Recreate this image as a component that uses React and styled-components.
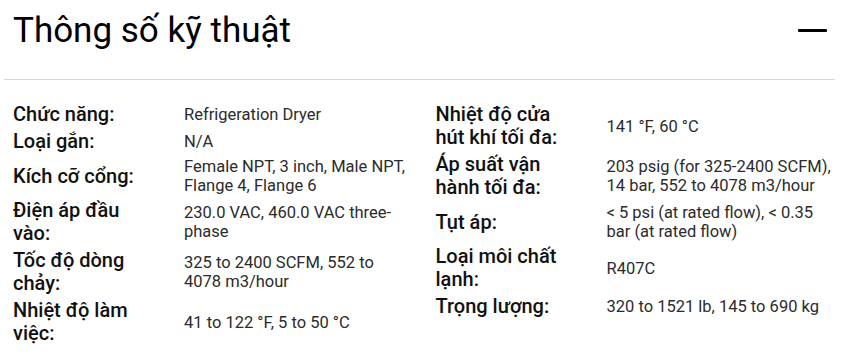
import React, { useState } from 'react';
import styled, { createGlobalStyle } from 'styled-components';

const GlobalStyle = createGlobalStyle`
  body {
    margin: 0;
    background: #fff;
    font-family: Roboto, "Noto Sans", sans-serif;
  }
`;

const StyledSection = styled.section`
  margin: 0 12px 0 4px;
`;

const StyledHeader = styled.div`
  display: flex;
  justify-content: space-between;
  align-items: flex-start;
  height: 80px;
  padding: 11px 8px 0 9px;
  box-sizing: border-box;
  border-bottom: 1px solid #d3d8df;
`;

const StyledTitle = styled.h2`
  margin: 0;
  font-size: 35px;
  line-height: 40px;
  font-weight: 400;
  color: #000;
`;

const StyledToggle = styled.button`
  display: flex;
  align-items: center;
  justify-content: center;
  width: 29px;
  height: 29px;
  margin-top: 5px;
  padding: 0;
  border: none;
  background: none;
  cursor: pointer;

  span {
    display: block;
    width: 29px;
    height: 3px;
    border-radius: 1px;
    background: #000;
  }
`;

const StyledBody = styled.div`
  display: grid;
  grid-template-columns: 1fr 1fr;
  align-items: start;
  column-gap: 23px;
  padding: 23px 0 0 9px;
`;

const StyledList = styled.dl`
  display: grid;
  grid-template-columns: 171px 1fr;
  row-gap: 4px;
  align-items: center;
  align-content: start;
  margin: 0;
`;

const StyledLabel = styled.dt`
  padding-right: 34px;
  font-size: 20px;
  line-height: 23px;
  font-weight: 500;
  color: #111;
`;

const StyledValue = styled.dd`
  margin: 0;
  font-size: 16.5px;
  line-height: 19px;
  color: #2b2b2b;
`;

const leftSpecs = [
  ['Chức năng:', 'Refrigeration Dryer'],
  ['Loại gắn:', 'N/A'],
  ['Kích cỡ cổng:', 'Female NPT, 3 inch, Male NPT, Flange 4, Flange 6'],
  ['Điện áp đầu vào:', '230.0 VAC, 460.0 VAC three-phase'],
  ['Tốc độ dòng chảy:', '325 to 2400 SCFM, 552 to 4078 m3/hour'],
  ['Nhiệt độ làm việc:', '41 to 122 °F, 5 to 50 °C'],
];

const rightSpecs = [
  ['Nhiệt độ cửa hút khí tối đa:', '141 °F, 60 °C'],
  ['Áp suất vận hành tối đa:', '203 psig (for 325-2400 SCFM), 14 bar, 552 to 4078 m3/hour'],
  ['Tụt áp:', '< 5 psi (at rated flow), < 0.35 bar (at rated flow)'],
  ['Loại môi chất lạnh:', 'R407C'],
  ['Trọng lượng:', '320 to 1521 lb, 145 to 690 kg'],
];

const SpecList = ({ items }) => (
  <StyledList>
    {items.map(([label, value]) => (
      <React.Fragment key={label}>
        <StyledLabel>{label}</StyledLabel>
        <StyledValue>{value}</StyledValue>
      </React.Fragment>
    ))}
  </StyledList>
);

const App = () => {
  const [open, setOpen] = useState(true);

  return (
    <StyledSection>
      <GlobalStyle />
      <StyledHeader>
        <StyledTitle>Thông số kỹ thuật</StyledTitle>
        <StyledToggle onClick={() => setOpen(!open)} aria-label="Thu gọn">
          <span />
        </StyledToggle>
      </StyledHeader>
      {open && (
        <StyledBody>
          <SpecList items={leftSpecs} />
          <SpecList items={rightSpecs} />
        </StyledBody>
      )}
    </StyledSection>
  );
};

export default App;
